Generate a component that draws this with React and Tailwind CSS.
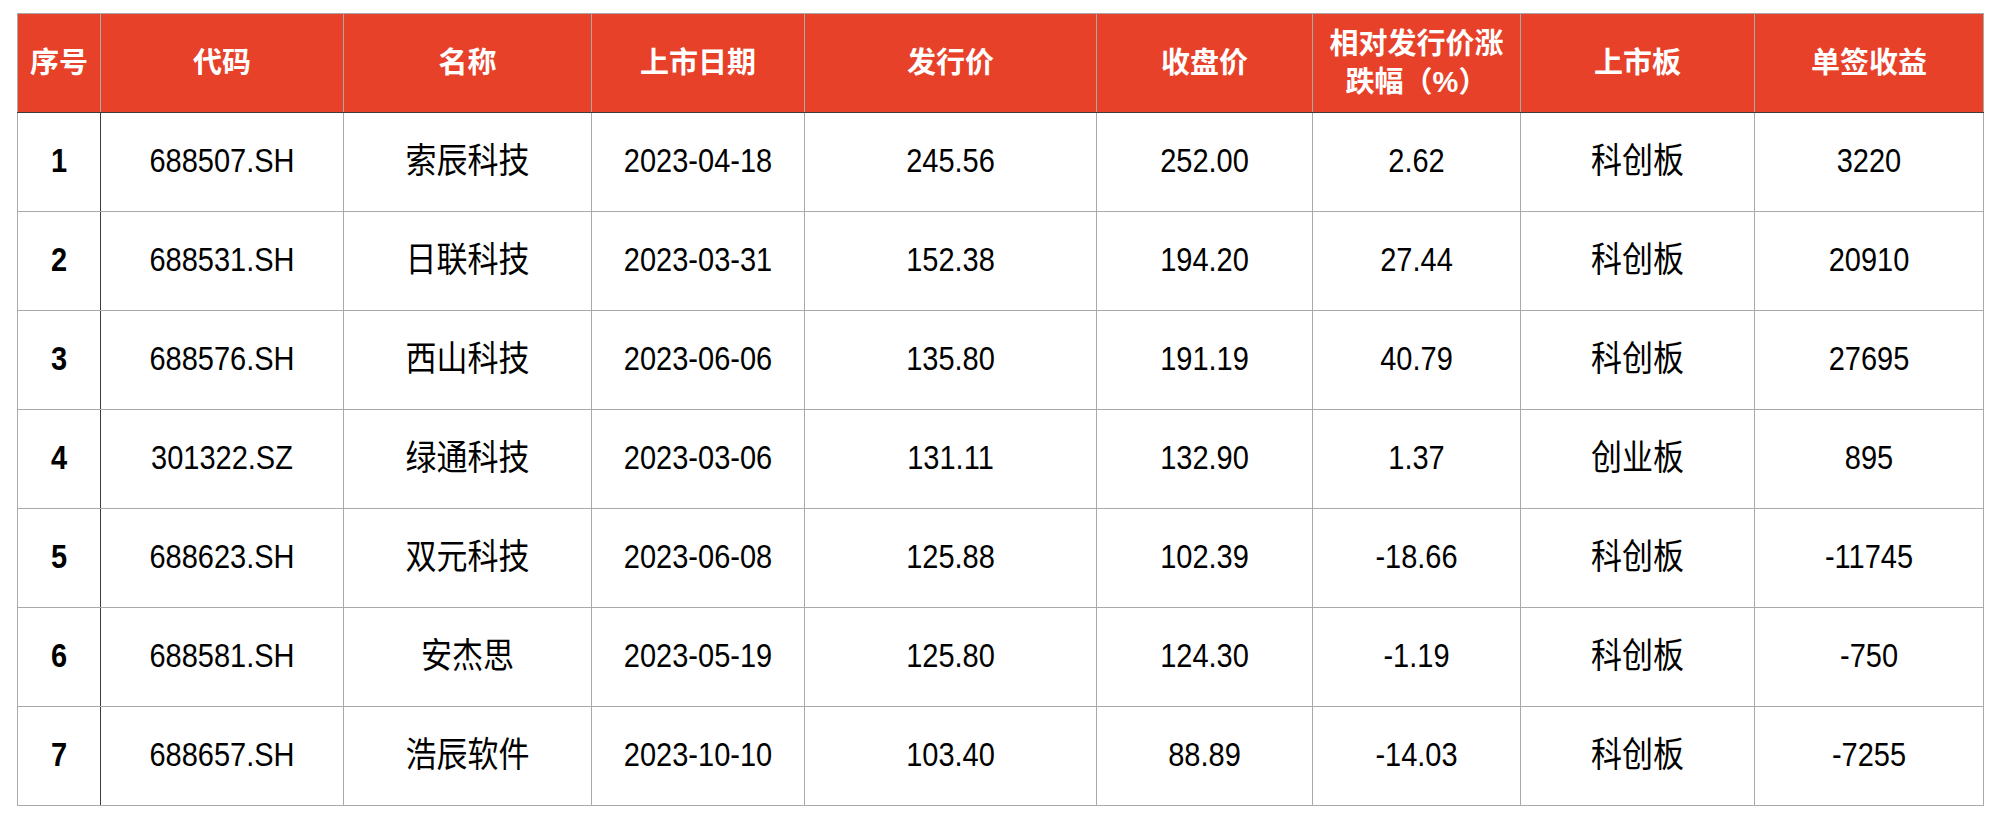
const columns = [
  { label: "序号", width: 83 },
  { label: "代码", width: 243 },
  { label: "名称", width: 248 },
  { label: "上市日期", width: 213 },
  { label: "发行价", width: 292 },
  { label: "收盘价", width: 216 },
  { label: "相对发行价涨跌幅（%）", width: 208 },
  { label: "上市板", width: 234 },
  { label: "单签收益", width: 229 },
];

const rows = [
  ["1", "688507.SH", "索辰科技", "2023-04-18", "245.56", "252.00", "2.62", "科创板", "3220"],
  ["2", "688531.SH", "日联科技", "2023-03-31", "152.38", "194.20", "27.44", "科创板", "20910"],
  ["3", "688576.SH", "西山科技", "2023-06-06", "135.80", "191.19", "40.79", "科创板", "27695"],
  ["4", "301322.SZ", "绿通科技", "2023-03-06", "131.11", "132.90", "1.37", "创业板", "895"],
  ["5", "688623.SH", "双元科技", "2023-06-08", "125.88", "102.39", "-18.66", "科创板", "-11745"],
  ["6", "688581.SH", "安杰思", "2023-05-19", "125.80", "124.30", "-1.19", "科创板", "-750"],
  ["7", "688657.SH", "浩辰软件", "2023-10-10", "103.40", "88.89", "-14.03", "科创板", "-7255"],
];

// columns holding Chinese text render a touch larger in the source
const cjkCols = [2, 7];

const font = {
  fontFamily: '"Liberation Sans", "Noto Sans CJK SC", sans-serif',
};

function cellClass(i) {
  if (i === 0) {
    return "border border-[#a9a9a9] border-r-[#3c3c3c] text-center text-[29px] font-bold";
  }
  if (cjkCols.includes(i)) {
    return "border border-[#a9a9a9] text-center text-[31px]";
  }
  return "border border-[#a9a9a9] text-center text-[29px]";
}

export default function App() {
  return (
    <div className="min-h-screen bg-white pl-[17px] pt-[13px]" style={font}>
      <table className="table-fixed border-collapse w-[1966px] text-black">
        <colgroup>
          {columns.map((c) => (
            <col key={c.label} style={{ width: c.width }} />
          ))}
        </colgroup>
        <thead>
          <tr className="h-[99px] bg-[#e8412a]">
            {columns.map((c) => (
              <th
                key={c.label}
                className="border border-[#a9a9a9] border-b-[#3c3c3c] px-3 text-[29px] leading-[38px] font-bold text-white text-center"
              >
                {c.label}
              </th>
            ))}
          </tr>
        </thead>
        <tbody>
          {rows.map((r) => (
            <tr key={r[0]} className="h-[99px]">
              {r.map((v, i) => (
                <td key={i} className={cellClass(i)}>
                  <span className="inline-block scale-y-[1.12]">{v}</span>
                </td>
              ))}
            </tr>
          ))}
        </tbody>
      </table>
    </div>
  );
}
